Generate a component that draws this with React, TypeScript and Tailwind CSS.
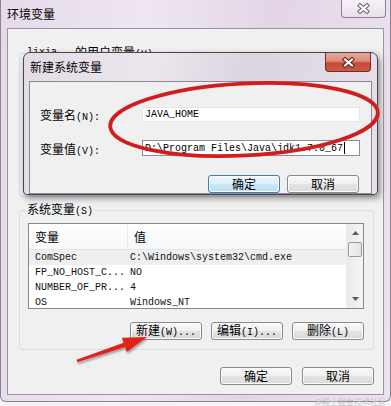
import clsx from 'clsx';
import type { ReactNode } from 'react';

const cjk = "font-['Noto_Sans_CJK_SC',sans-serif]";
const mono = "font-['Liberation_Mono','Noto_Sans_CJK_SC',monospace]";

const systemVars = [
  { name: 'ComSpec', value: 'C:\\Windows\\system32\\cmd.exe' },
  { name: 'FP_NO_HOST_C...', value: 'NO' },
  { name: 'NUMBER_OF_PR...', value: '4' },
  { name: 'OS', value: 'Windows_NT' },
];

function Caption({ zh, en }: { zh: string; en: string }) {
  return (
    <span className="inline-flex items-baseline whitespace-pre text-black">
      <span className={clsx(cjk, 'text-[12px] leading-[16px]')}>{zh}</span>
      <span className={clsx(mono, 'text-[10px] leading-[16px]')}>{en}</span>
    </span>
  );
}

function WinButton({ children, primary }: { children: ReactNode; primary?: boolean }) {
  return (
    <div
      className={clsx(
        'flex h-[18px] w-[72px] items-center justify-center rounded-[3px] border shadow-[inset_0_0_0_1px_#fbfbfb]',
        primary
          ? 'border-[#3c7fb1] bg-[linear-gradient(#eef7fd,#dcf0fb_50%,#c9e7f8_50%,#b9dff5)]'
          : 'border-[#8a8a8a] bg-[linear-gradient(#f8f8f8,#f0f0f0_50%,#e4e4e4_50%,#dadada)]'
      )}
    >
      {children}
    </div>
  );
}

function CloseGlyph({ outline }: { outline: string }) {
  return (
    <svg width="13" height="11" viewBox="0 0 13 11">
      <path d="M3 2.5 L10 8.5 M10 2.5 L3 8.5" stroke={outline} strokeWidth="4.2" strokeLinecap="square" />
      <path d="M3 2.5 L10 8.5 M10 2.5 L3 8.5" stroke="#ffffff" strokeWidth="2.2" strokeLinecap="square" />
    </svg>
  );
}

function ScrollBar() {
  return (
    <div className="flex w-[17px] flex-col border-l border-[#ececec] bg-[linear-gradient(90deg,#e9e9e9,#f5f5f5)]">
      <div className="flex h-[18px] items-center justify-center">
        <svg width="7" height="4" viewBox="0 0 7 4">
          <path d="M0 4 L3.5 0 L7 4 Z" fill="#5a5a5a" />
        </svg>
      </div>
      <div className="mx-[1px] h-[15px] rounded-[2px] border border-[#9a9a9a] bg-[linear-gradient(90deg,#f4f4f4,#e4e4e4)]" />
      <div className="flex-1" />
      <div className="flex h-[18px] items-center justify-center">
        <svg width="7" height="4" viewBox="0 0 7 4">
          <path d="M0 0 L3.5 4 L7 0 Z" fill="#5a5a5a" />
        </svg>
      </div>
    </div>
  );
}

function VarList() {
  return (
    <div className="flex h-[86px] border border-[#828790] bg-white">
      <div className="flex min-w-0 flex-1 flex-col overflow-hidden">
        <div className="flex h-[26px] shrink-0 border-b border-[#e5e5e5] bg-[linear-gradient(#ffffff,#f6f7f9)]">
          <div className={clsx(cjk, 'flex w-[99px] items-center border-r border-[#ececec] pl-[6px] text-[12px] text-black')}>变量</div>
          <div className={clsx(cjk, 'flex items-center pl-[6px] text-[12px] text-black')}>值</div>
        </div>
        {systemVars.map((v, i) => (
          <div
            key={v.name}
            className={clsx(mono, 'flex h-[15px] shrink-0 items-center text-[10px] text-[#111]', i === 0 && 'bg-[#efefef]')}
          >
            <div className="w-[99px] whitespace-pre pl-[6px]">{v.name}</div>
            <div className="whitespace-pre pl-[2px]">{v.value}</div>
          </div>
        ))}
      </div>
      <ScrollBar />
    </div>
  );
}

function NewVarDialog() {
  return (
    <div className="absolute left-[23px] top-[52px] flex h-[143px] w-[355px] flex-col rounded-t-[7px] rounded-b-[4px] border border-[#4a4550] bg-[linear-gradient(100deg,#e3dce6,#ece6ee_35%,#dcd4df_60%,#e7e0ea)] px-[5px] pb-[5px] shadow-[2px_3px_6px_rgba(0,0,0,0.45)]">
      <div className="flex h-[28px] shrink-0 items-center">
        <span className={clsx(cjk, 'pl-[1px] text-[12px] text-black')}>新建系统变量</span>
        <div className="mr-[1px] ml-auto flex h-[19px] w-[46px] items-center justify-center self-start rounded-b-[4px] border border-t-0 border-[#6e2c24] bg-[linear-gradient(#e9a898,#dc8a78_45%,#c8483a_55%,#c75a48)]">
          <CloseGlyph outline="#5c2019" />
        </div>
      </div>
      <div className="flex flex-1 flex-col border border-[#8e8795] bg-[#f0f0f0] pt-[20px] pl-[10px] pr-[11px]">
        <div className="flex items-center">
          <div className="w-[102px]">
            <Caption zh="变量名" en="(N):" />
          </div>
          <div className={clsx(mono, 'flex h-[15px] flex-1 items-center border border-[#e3e5ea] bg-white pl-[2px] text-[10px] text-black')}>
            JAVA_HOME
          </div>
        </div>
        <div className="mt-[10px] flex items-center">
          <div className="w-[102px]">
            <Caption zh="变量值" en="(V):" />
          </div>
          <div className={clsx(mono, 'flex h-[16px] flex-1 items-center border border-[#8b8f94] bg-white pl-[2px] text-[10px] text-black')}>
            <span className="whitespace-pre">D:\Program Files\Java\jdk1.7.0_67</span>
            <span className="ml-[1px] h-[12px] w-[1px] bg-black" />
          </div>
        </div>
        <div className="mt-[15px] flex justify-end gap-[7px] pr-[1px]">
          <WinButton primary>
            <span className={clsx(cjk, 'text-[12px] text-black')}>确定</span>
          </WinButton>
          <WinButton>
            <span className={clsx(cjk, 'text-[12px] text-black')}>取消</span>
          </WinButton>
        </div>
      </div>
    </div>
  );
}

function Annotations() {
  return (
    <svg className="pointer-events-none absolute inset-0" width="391" height="406" viewBox="0 0 391 406">
      <defs>
        <filter id="arrowShadow" x="-20%" y="-50%" width="140%" height="200%">
          <feDropShadow dx="1" dy="2" stdDeviation="1.2" floodColor="#000" floodOpacity="0.35" />
        </filter>
      </defs>
      <ellipse
        cx="244"
        cy="119.5"
        rx="134"
        ry="36"
        transform="rotate(-3 244 119.5)"
        fill="none"
        stroke="#d21d1d"
        strokeWidth="3.8"
      />
      <polygon
        points="76.6,359.8 123.6,342.7 121.9,337.7 147,337 126.7,351.9 125,346.9 77.4,362.2"
        fill="#e1231b"
        filter="url(#arrowShadow)"
      />
    </svg>
  );
}

export default function App() {
  return (
    <div className="relative h-[406px] w-[391px] overflow-hidden bg-[#f5f3f6]">
      <div className="flex h-[402px] flex-col rounded-b-[6px] border-x border-b border-[#8a8290] bg-[linear-gradient(95deg,#e6dae9,#efe6f1_35%,#e3d5e6_65%,#ece2ee)] px-[6px] pb-[6px]">
        <div className="flex h-[28px] shrink-0 items-center">
          <span className={clsx(cjk, 'text-[12px] text-black')}>环境变量</span>
          <div className="ml-auto mr-[-2px] flex h-[18px] w-[45px] items-center justify-center self-start rounded-b-[4px] border border-t-0 border-[#8c8092] bg-[linear-gradient(#f7f2f8,#e8dfeb)]">
            <CloseGlyph outline="#6b6470" />
          </div>
        </div>
        <div className="flex flex-1 flex-col border border-[#9b94a2] bg-[#f0f0f0]">
          <fieldset className="mt-[16px] ml-[11px] mr-[9px] h-[152px] rounded-[3px] border border-[#d5dfe5] px-[8px]">
            <legend className="ml-[-2px] flex h-[16px] items-center gap-[18px] px-[1px] leading-[16px]">
              <Caption zh="" en="lixia" />
              <Caption zh="的用户变量" en="(U)" />
            </legend>
          </fieldset>
          <fieldset className="mt-[5px] ml-[11px] mr-[9px] rounded-[3px] border border-[#d5dfe5] pl-[8px] pr-[9px] pb-[9px]">
            <legend className="ml-[-2px] flex h-[16px] items-center px-[1px] leading-[16px]">
              <Caption zh="系统变量" en="(S)" />
            </legend>
            <div className="mt-[5px]">
              <VarList />
            </div>
            <div className="mt-[13px] flex justify-end gap-[9px]">
              <WinButton>
                <Caption zh="新建" en="(W)..." />
              </WinButton>
              <WinButton>
                <Caption zh="编辑" en="(I)..." />
              </WinButton>
              <WinButton>
                <Caption zh="删除" en="(L)" />
              </WinButton>
            </div>
          </fieldset>
          <div className="mt-[17px] flex justify-end gap-[10px] pr-[9px]">
            <WinButton>
              <span className={clsx(cjk, 'text-[12px] text-black')}>确定</span>
            </WinButton>
            <WinButton>
              <span className={clsx(cjk, 'text-[12px] text-black')}>取消</span>
            </WinButton>
          </div>
        </div>
      </div>
      <NewVarDialog />
      <span className={clsx(cjk, 'absolute bottom-[-2px] right-[5px] text-[8px] text-[#c4c2c6]')}>@稀土掘金技术社区</span>
      <Annotations />
    </div>
  );
}
